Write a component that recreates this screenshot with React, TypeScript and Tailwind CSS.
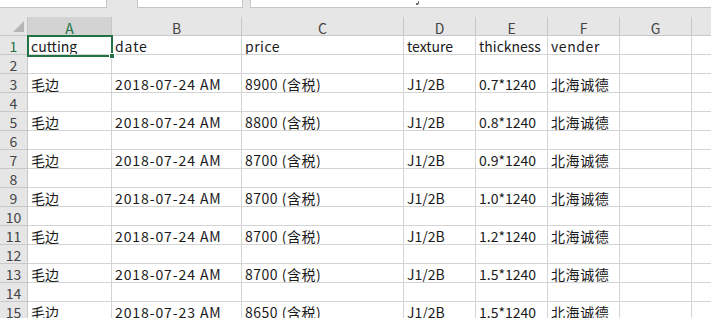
import React from "react";

const cols = [
  { l: "A", w: "w-[84px]", t: "" },
  { l: "B", w: "w-[130px]", t: "tracking-[0.9px]" },
  { l: "C", w: "w-[162px]", t: "tracking-[0.5px]" },
  { l: "D", w: "w-[72px]", t: "" },
  { l: "E", w: "w-[72px]", t: "" },
  { l: "F", w: "w-[72px]", t: "tracking-[0.6px]" },
  { l: "G", w: "w-[72px]", t: "" },
  { l: "", w: "w-[40px]", t: "" },
];

const data: Record<number, string[]> = {
  1: ["cutting", "date", "price", "texture", "thickness", "vender"],
  3: ["毛边", "2018-07-24 AM", "8900 (含税)", "J1/2B", "0.7*1240", "北海诚德"],
  5: ["毛边", "2018-07-24 AM", "8800 (含税)", "J1/2B", "0.8*1240", "北海诚德"],
  7: ["毛边", "2018-07-24 AM", "8700 (含税)", "J1/2B", "0.9*1240", "北海诚德"],
  9: ["毛边", "2018-07-24 AM", "8700 (含税)", "J1/2B", "1.0*1240", "北海诚德"],
  11: ["毛边", "2018-07-24 AM", "8700 (含税)", "J1/2B", "1.2*1240", "北海诚德"],
  13: ["毛边", "2018-07-24 AM", "8700 (含税)", "J1/2B", "1.5*1240", "北海诚德"],
  15: ["毛边", "2018-07-23 AM", "8650 (含税)", "J1/2B", "1.5*1240", "北海诚德"],
};

const rows = Array.from({ length: 15 }, (_, i) => i + 1);

export default function App() {
  return (
    <div className="relative w-[711px] h-[318px] overflow-hidden bg-white text-[14px] font-['Noto_Sans_CJK_SC',sans-serif] text-[#1a1a1a]">
      {/* top bar */}
      <div className="flex h-[17px] bg-[#e6e6e6]">
        <div className="w-[107px] h-[8px] bg-white border-b border-r border-[#c6c6c6]" />
        <div className="w-[30px]" />
        <div className="w-[106px] h-[8px] bg-white border-b border-x border-[#c6c6c6]" />
        <div className="w-[7px]" />
        <div className="relative flex-1 h-[8px] bg-white border-b border-l border-[#c6c6c6]">
          <div className="absolute left-[165px] top-[1px] w-[3px] h-[4px] border-b-2 border-r border-[#666] rounded-br-[2px]" />
        </div>
      </div>
      {/* header */}
      <div className="flex h-[19px] bg-[#e6e6e6] border-b border-[#c8c8c8] text-[#444] leading-[14px]">
        <div className="relative w-[28px] shrink-0 border-r border-[#c8c8c8]">
          <div className="absolute right-[3px] bottom-[3px] w-0 h-0 border-l-[11px] border-l-transparent border-b-[11px] border-b-[#b5b5b5]" />
        </div>
        {cols.map((c) => (
          <div
            key={c.l}
            className={`${c.w} shrink-0 border-r border-[#c8c8c8] text-center pt-[4px] ${c.l === "A" ? "bg-[#d3d3d3] text-[#217346]" : ""}`}
          >
            {c.l}
          </div>
        ))}
      </div>
      {/* rows */}
      {rows.map((r) => (
        <div key={r} className="flex h-[19px]">
          <div
            className={`w-[28px] shrink-0 border-r border-b border-[#c8c8c8] bg-[#e6e6e6] text-center leading-[15px] pt-[3px] ${r === 1 ? "bg-[#d3d3d3] text-[#217346]" : "text-[#444]"}`}
          >
            {r}
          </div>
          {cols.map((c, ci) => (
            <div
              key={c.l}
              className={`${c.w} ${c.t} shrink-0 border-r border-b border-[#d4d4d4] pl-[3px] leading-[16px] pt-[2px] whitespace-nowrap overflow-hidden`}
            >
              {data[r]?.[ci] ?? ""}
            </div>
          ))}
        </div>
      ))}
      {/* selection */}
      <div className="absolute left-[27px] top-[35px] w-[86px] h-[22px] border-2 border-[#217346]">
        <div className="absolute right-[-4px] bottom-[-4px] w-[6px] h-[6px] bg-[#217346] border border-white" />
      </div>
    </div>
  );
}
